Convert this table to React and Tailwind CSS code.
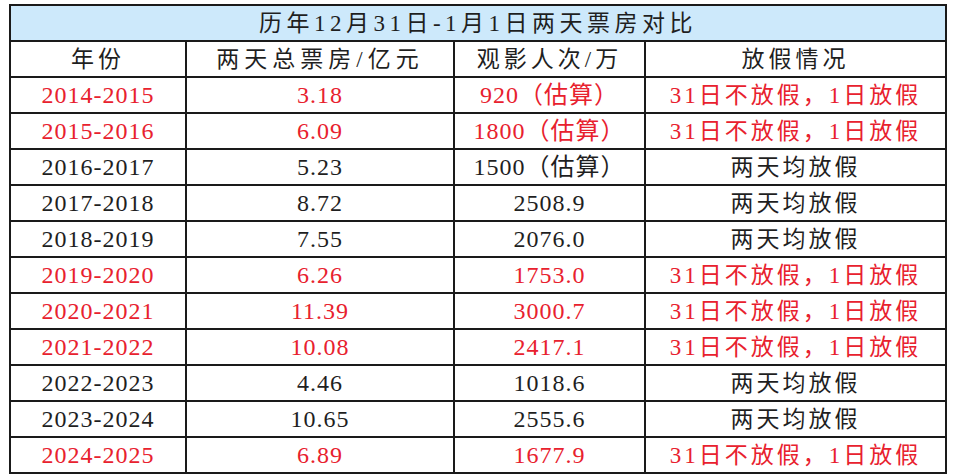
import React from "react";

const rows = [
  ["2014-2015", "3.18", "920（估算）", "31日不放假，1日放假", true],
  ["2015-2016", "6.09", "1800（估算）", "31日不放假，1日放假", true],
  ["2016-2017", "5.23", "1500（估算）", "两天均放假", false],
  ["2017-2018", "8.72", "2508.9", "两天均放假", false],
  ["2018-2019", "7.55", "2076.0", "两天均放假", false],
  ["2019-2020", "6.26", "1753.0", "31日不放假，1日放假", true],
  ["2020-2021", "11.39", "3000.7", "31日不放假，1日放假", true],
  ["2021-2022", "10.08", "2417.1", "31日不放假，1日放假", true],
  ["2022-2023", "4.46", "1018.6", "两天均放假", false],
  ["2023-2024", "10.65", "2555.6", "两天均放假", false],
  ["2024-2025", "6.89", "1677.9", "31日不放假，1日放假", true],
];

const font = { fontFamily: '"Liberation Serif", "Noto Sans CJK SC", serif' };

export default function App() {
  return (
    <div className="w-[953px] h-[476px] bg-white pt-[4px] pl-[9px]" style={font}>
      <table className="border-collapse border-2 border-[#1a1a1a] table-fixed w-[936px] text-[24px] leading-none text-[#1f1f1f]">
        <colgroup>
          <col className="w-[176px]" />
          <col className="w-[268px]" />
          <col className="w-[191px]" />
          <col className="w-[301px]" />
        </colgroup>
        <thead>
          <tr className="h-[36px] bg-[#cde9fb]">
            <th colSpan={4} className="border-2 border-[#1a1a1a] font-normal tracking-[4.5px] text-[23px]">
              历年12月31日-1月1日两天票房对比
            </th>
          </tr>
          <tr className="h-[36px]">
            <th className="border-2 border-[#1a1a1a] font-normal tracking-[4px] text-[23px]">年份</th>
            <th className="border-2 border-[#1a1a1a] font-normal tracking-[5px] text-[23px]">两天总票房/亿元</th>
            <th className="border-2 border-[#1a1a1a] font-normal tracking-[4px] text-[23px]">观影人次/万</th>
            <th className="border-2 border-[#1a1a1a] font-normal tracking-[4px] text-[23px]">放假情况</th>
          </tr>
        </thead>
        <tbody>
          {rows.map(([year, box, people, holiday, red]) => (
            <tr key={year} className={`h-[36px] ${red ? "text-[#e8212e]" : "text-[#1f1f1f]"}`}>
              <td className="border-2 border-[#1a1a1a] text-center tracking-[1px]">{year}</td>
              <td className="border-2 border-[#1a1a1a] text-center tracking-[1px]">{box}</td>
              <td className="border-2 border-[#1a1a1a] text-center tracking-[1px]">{people}</td>
              <td className="border-2 border-[#1a1a1a] text-center tracking-[3px] text-[23px]">{holiday}</td>
            </tr>
          ))}
        </tbody>
      </table>
    </div>
  );
}
